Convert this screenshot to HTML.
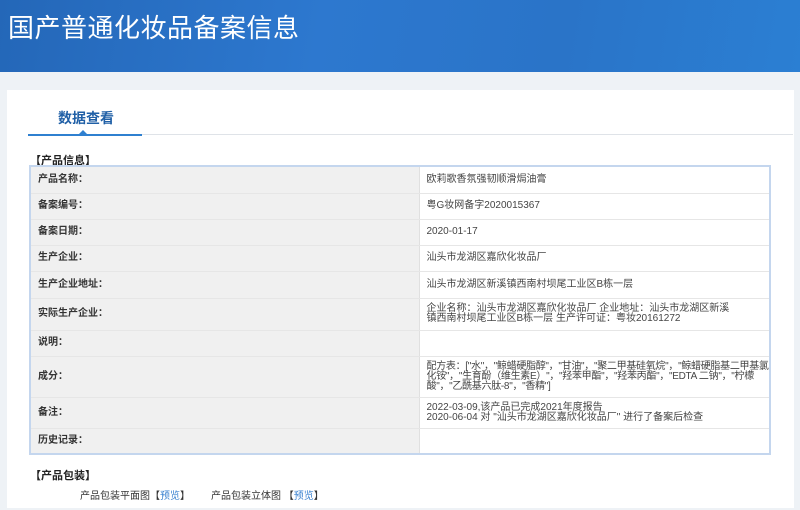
<!DOCTYPE html>
<html><head><meta charset="utf-8"><style>
*{margin:0;padding:0;box-sizing:border-box}
body{width:800px;height:510px;overflow:hidden;background:#eef2f6;font-family:"Liberation Sans","Noto Sans CJK SC",sans-serif;position:relative}
.hd{position:absolute;left:0;top:0;width:800px;height:72px;background:linear-gradient(100deg,#2467b8 0%,#2d78cf 40%,#2a74c8 70%,#2b7fd3 100%)}
.hd h1{position:absolute;left:8px;top:8px;font-size:26px;font-weight:normal;color:#fff;letter-spacing:0.5px}
.panel{position:absolute;left:7px;top:90px;width:787px;height:418px;background:#fff}
.tab{position:absolute;left:58px;top:108px;font-size:14px;color:#1f5fa6;font-weight:bold}
.line{position:absolute;left:142px;top:134px;width:651px;height:1px;background:#dfe3e8}
.bl{position:absolute;left:28px;top:134px;width:114px;height:2px;background:#2f80d0}
.tri{position:absolute;left:79px;top:130px;width:0;height:0;border-left:4px solid transparent;border-right:4px solid transparent;border-bottom:4px solid #2f80d0}
.sec{position:absolute;font-size:11px;font-weight:bold;color:#222}
table{position:absolute;left:29px;top:165px;width:742px;border-collapse:collapse;border:2px solid #c4d6ee;font-size:10px;color:#333;table-layout:fixed}
td{border-bottom:1px solid #e6e6e6;vertical-align:middle;line-height:10px;white-space:nowrap;overflow:hidden}
td.l{width:389px;background:#f0f0f0;padding-left:7px;font-weight:bold;color:#333;border-right:1px solid #e0e0e0}
td.v{padding-left:7px;background:#fff;color:#444}
.pk{position:absolute;top:487px;font-size:10px;color:#333}
.pk a{color:#3a82d0;text-decoration:none}
</style></head><body>
<div class="hd"><h1>国产普通化妆品备案信息</h1></div>
<div class="panel"></div>
<div class="tab">数据查看</div>
<div class="line"></div><div class="bl"></div><div class="tri"></div>
<div class="sec" style="left:30px;top:152px">【产品信息】</div>
<table>
<tr style="height:27px"><td class="l">产品名称：</td><td class="v">欧莉歌香氛强韧顺滑焗油膏</td></tr>
<tr style="height:26px"><td class="l">备案编号：</td><td class="v">粤G妆网备字2020015367</td></tr>
<tr style="height:26px"><td class="l">备案日期：</td><td class="v">2020-01-17</td></tr>
<tr style="height:26px"><td class="l">生产企业：</td><td class="v">汕头市龙湖区嘉欣化妆品厂</td></tr>
<tr style="height:27px"><td class="l">生产企业地址：</td><td class="v">汕头市龙湖区新溪镇西南村坝尾工业区B栋一层</td></tr>
<tr style="height:32px"><td class="l">实际生产企业：</td><td class="v">企业名称：汕头市龙湖区嘉欣化妆品厂 企业地址：汕头市龙湖区新溪<br>镇西南村坝尾工业区B栋一层 生产许可证：粤妆20161272</td></tr>
<tr style="height:26px"><td class="l">说明：</td><td class="v"></td></tr>
<tr style="height:41px"><td class="l">成分：</td><td class="v" style="letter-spacing:-0.3px">配方表：["水"，"鲸蜡硬脂醇"，"甘油"，"聚二甲基硅氧烷"，"鲸蜡硬脂基二甲基氯<br>化铵"，"生育酚（维生素E）"，"羟苯甲酯"，"羟苯丙酯"，"EDTA 二钠"，"柠檬<br>酸"，"乙酰基六肽-8"，"香精"]</td></tr>
<tr style="height:31px"><td class="l">备注：</td><td class="v">2022-03-09,该产品已完成2021年度报告<br>2020-06-04 对 "汕头市龙湖区嘉欣化妆品厂" 进行了备案后检查</td></tr>
<tr style="height:26px"><td class="l">历史记录：</td><td class="v"></td></tr>
</table>
<div class="sec" style="left:30px;top:467px">【产品包装】</div>
<div class="pk" style="left:80px">产品包装平面图【<a>预览</a>】</div>
<div class="pk" style="left:211px">产品包装立体图 【<a>预览</a>】</div>
</body></html>
